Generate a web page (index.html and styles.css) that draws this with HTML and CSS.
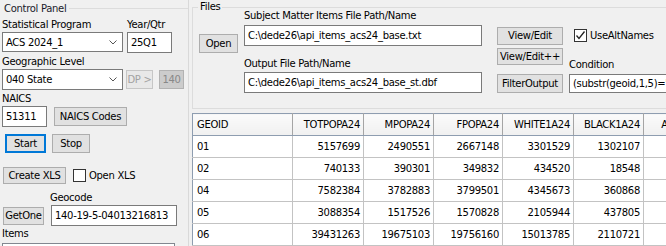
FILE: index.html
```html
<html>
<head>
  <meta charset="utf-8" />
  <title>Control Panel</title>
  <link rel="stylesheet" href="styles.css">
</head>
<body>

<div class="app">

  <!-- left side: control panel -->
  <div class="left">
    <div class="gtitle"><span>Control Panel</span><i class="rule"></i></div>

    <div class="row prog">
      <div class="col c-combo">
        <div class="lbl">Statistical Program</div>
        <div class="combo">ACS 2024_1<svg class="chev" width="8" height="5" viewBox="0 0 8 5"><polyline points="0.5,0.5 4,4 7.5,0.5" fill="none" stroke="#555" stroke-width="1"/></svg></div>
      </div>
      <div class="col c-yq">
        <div class="lbl">Year/Qtr</div>
        <div class="tbox yq">25Q1</div>
      </div>
    </div>

    <div class="lbl geo-lbl">Geographic Level</div>
    <div class="row geo">
      <div class="combo combo2">040 State<svg class="chev" width="8" height="5" viewBox="0 0 8 5"><polyline points="0.5,0.5 4,4 7.5,0.5" fill="none" stroke="#555" stroke-width="1"/></svg></div>
      <button class="btn dis dp">DP &gt;</button>
      <button class="btn dis2 b140">140</button>
    </div>

    <div class="lbl naics-lbl">NAICS</div>
    <div class="row naics">
      <div class="tbox naics-box">51311</div>
      <button class="btn codes">NAICS Codes</button>
    </div>

    <div class="row runs">
      <button class="btn start">Start</button>
      <button class="btn stop">Stop</button>
    </div>

    <div class="row xls">
      <button class="btn create">Create XLS</button>
      <span class="cbox"></span>
      <span class="cb-text">Open XLS</span>
    </div>

    <div class="row geocode">
      <button class="btn getone">GetOne</button>
      <div class="col">
        <div class="lbl">Geocode</div>
        <div class="tbox geo-box">140-19-5-04013216813</div>
      </div>
    </div>

    <div class="lbl items-lbl">Items</div>
    <div class="listbox"></div>
  </div>

  <div class="splitter"></div>

  <!-- right side: files + grid -->
  <div class="right">
    <div class="files">
      <span class="legend">Files</span>
      <button class="btn open">Open</button>
      <div class="col paths">
        <div class="lbl subj-lbl">Subject Matter Items File Path/Name</div>
        <div class="tbox path">C:\dede26\api_items_acs24_base.txt</div>
        <div class="lbl out-lbl">Output File Path/Name</div>
        <div class="tbox path path2">C:\dede26\api_items_acs24_base_st.dbf</div>
      </div>
      <div class="col views">
        <button class="btn view">View/Edit</button>
        <button class="btn viewpp">View/Edit++</button>
        <button class="btn filter">FilterOutput</button>
      </div>
      <div class="col cond">
        <div class="alt">
          <span class="cbox on"><svg width="11" height="11" viewBox="0 0 11 11"><polyline points="1.5,5.5 4,8.5 9.5,1.5" fill="none" stroke="#222" stroke-width="1.3"/></svg></span>
          <span class="cb-text">UseAltNames</span>
        </div>
        <div class="lbl cond-lbl">Condition</div>
        <div class="tbox cond-box">(substr(geoid,1,5)="04013")</div>
      </div>
    </div>

    <table class="grid">
      <colgroup>
        <col class="w100"><col class="w71"><col class="w70"><col class="w69"><col class="w71"><col class="w70"><col class="w78">
      </colgroup>
      <thead>
        <tr><th class="txt">GEOID</th><th>TOTPOPA24</th><th>MPOPA24</th><th>FPOPA24</th><th>WHITE1A24</th><th>BLACK1A24</th><th>AMIND1A24</th></tr>
      </thead>
      <tbody>
        <tr><td class="txt">01</td><td>5157699</td><td>2490551</td><td>2667148</td><td>3301529</td><td>1302107</td><td></td></tr>
        <tr><td class="txt">02</td><td>740133</td><td>390301</td><td>349832</td><td>434520</td><td>18548</td><td></td></tr>
        <tr><td class="txt">04</td><td>7582384</td><td>3782883</td><td>3799501</td><td>4345673</td><td>360868</td><td></td></tr>
        <tr><td class="txt">05</td><td>3088354</td><td>1517526</td><td>1570828</td><td>2105944</td><td>437805</td><td></td></tr>
        <tr><td class="txt">06</td><td>39431263</td><td>19675103</td><td>19756160</td><td>15013785</td><td>2110721</td><td></td></tr>
      </tbody>
    </table>
  </div>

</div>

</body>
</html>
```

FILE: styles.css
```css
* {
  box-sizing: border-box;
}

body {
  margin: 0;
  background: #f0f0f0;
  font-family: "DejaVu Sans", Verdana, sans-serif;
  font-size: 10px;
  letter-spacing: -0.3px;
  color: #000;
  overflow: hidden;
}

.app {
  display: flex;
  width: 666px;
  height: 246px;
  overflow: hidden;
}

/* generic controls */
.lbl {
  height: 14px;
  line-height: 14px;
  white-space: nowrap;
}

.row {
  display: flex;
  align-items: flex-start;
}

.col {
  display: flex;
  flex-direction: column;
}

.tbox, .combo {
  background: #fff;
  border: 1px solid #7a7a7a;
  padding-left: 3px;
  white-space: nowrap;
  overflow: hidden;
  display: flex;
  align-items: center;
}

.combo {
  justify-content: space-between;
  padding-right: 5px;
}

.btn {
  appearance: none;
  -webkit-appearance: none;
  font: inherit;
  letter-spacing: inherit;
  color: #000;
  background: #e1e1e1;
  border: 1px solid #adadad;
  padding: 0;
  margin: 0;
  white-space: nowrap;
  line-height: 1;
}

.cbox {
  display: inline-flex;
  align-items: center;
  justify-content: center;
  width: 13px;
  height: 13px;
  background: #fff;
  border: 1px solid #333;
}

/* left panel */
.left {
  width: 188px;
  flex: none;
  padding-left: 2px;
}

.gtitle {
  display: flex;
  align-items: center;
  height: 14px;
  margin-top: 1px;
  padding-left: 2px;
  color: #1a1a2a;
}

.gtitle .rule {
  flex: 1;
  border-top: 1px solid #dcdcdc;
  margin-left: 3px;
}

.prog {
  margin-top: 3px;
  gap: 4px;
}

.c-combo {
  width: 121px;
}

.c-yq {
  width: 45px;
}

.combo {
  height: 20px;
}

.yq {
  height: 21px;
}

.geo-lbl {
  margin-top: 2px;
}

.combo2 {
  width: 121px;
  height: 21px;
}

.dp {
  margin: 1px 0 0 3px;
  width: 27px;
  height: 19px;
  background: #e8e8e8;
  border-color: #c6c6c6;
  color: #a2a2a2;
}

.b140 {
  margin: 1px 0 0 6px;
  width: 25px;
  height: 19px;
  background: #cccccc;
  border-color: #b2b2b2;
  color: #888;
}

.naics-lbl {
  margin-top: 2px;
}

.naics-box {
  width: 45px;
  height: 21px;
}

.codes {
  margin: 1px 0 0 7px;
  width: 73px;
  height: 19px;
}

.runs {
  margin-top: 7px;
  padding-left: 3px;
}

.start {
  width: 41px;
  height: 19px;
  border: 2px solid #0078d7;
}

.stop {
  margin-left: 6px;
  width: 38px;
  height: 19px;
}

.xls {
  margin-top: 14px;
  padding-left: 1px;
  align-items: center;
}

.create {
  width: 63px;
  height: 17px;
}

.xls .cbox {
  margin-left: 7px;
}

.cb-text {
  margin-left: 3px;
}

.geocode {
  margin-top: 7px;
  padding-left: 1px;
}

.getone {
  margin-top: 16px;
  width: 41px;
  height: 18px;
}

.geocode .col {
  margin-left: 6px;
}

.geo-box {
  margin-left: 1px;
  width: 126px;
  height: 21px;
}

.items-lbl {
  margin-top: 1px;
}

.listbox {
  margin-top: 2px;
  width: 173px;
  height: 40px;
  background: #fff;
  border: 1px solid #828790;
}

.splitter {
  width: 4px;
  flex: none;
  border-left: 1px solid #d9d9d9;
}

/* right panel */
.right {
  flex: 1;
  min-width: 0;
  overflow: hidden;
}

.files {
  position: relative;
  display: flex;
  align-items: flex-start;
  margin-top: 7px;
  width: 520px;
  height: 102px;
  border: 1px solid #dcdcdc;
  border-right: 0;
  padding-left: 6px;
}

.legend {
  position: absolute;
  left: 5px;
  top: -8px;
  padding: 0 2px;
  line-height: 14px;
  background: #f0f0f0;
}

.open {
  margin-top: 26px;
  width: 39px;
  height: 19px;
}

.paths {
  margin-left: 6px;
  width: 238px;
}

.subj-lbl {
  margin-top: 1px;
}

.path {
  margin-top: 2px;
  height: 21px;
}

.out-lbl {
  margin-top: 11px;
}

.path2 {
  margin-top: 1px;
}

.views {
  margin-left: 15px;
  width: 66px;
}

.view {
  margin-top: 19px;
  height: 18px;
}

.viewpp {
  margin-top: 3px;
  height: 17px;
}

.filter {
  margin-top: 9px;
  height: 19px;
}

.cond {
  margin-left: 6px;
  width: 140px;
}

.alt {
  display: flex;
  align-items: center;
  margin: 21px 0 0 5px;
}

.cond-lbl {
  margin-top: 16px;
}

.cond-box {
  margin-top: 2px;
  height: 19px;
}

/* data grid */
.grid {
  margin-top: 4px;
  table-layout: fixed;
  width: 529px;
  border-collapse: collapse;
  font-size: 10px;
  letter-spacing: -0.3px;
  background: #fff;
  border-top: 1px solid #8e9db0;
  border-left: 1px solid #8e9db0;
}

.w100 { width: 100px; }
.w71 { width: 71px; }
.w70 { width: 70px; }
.w69 { width: 69px; }
.w78 { width: 78px; }

.grid th, .grid td {
  height: 22px;
  padding: 0 3px 0 4px;
  text-align: right;
  font-weight: normal;
  white-space: nowrap;
  overflow: hidden;
}

.grid th {
  background: linear-gradient(#fbfbfb, #f0f0f0);
  border-right: 1px solid #a5a5a5;
  border-bottom: 1px solid #8e9db0;
}

.grid td {
  border-right: 1px solid #c3c3c3;
  border-bottom: 1px solid #c3c3c3;
}

.grid .txt {
  text-align: left;
}
```
